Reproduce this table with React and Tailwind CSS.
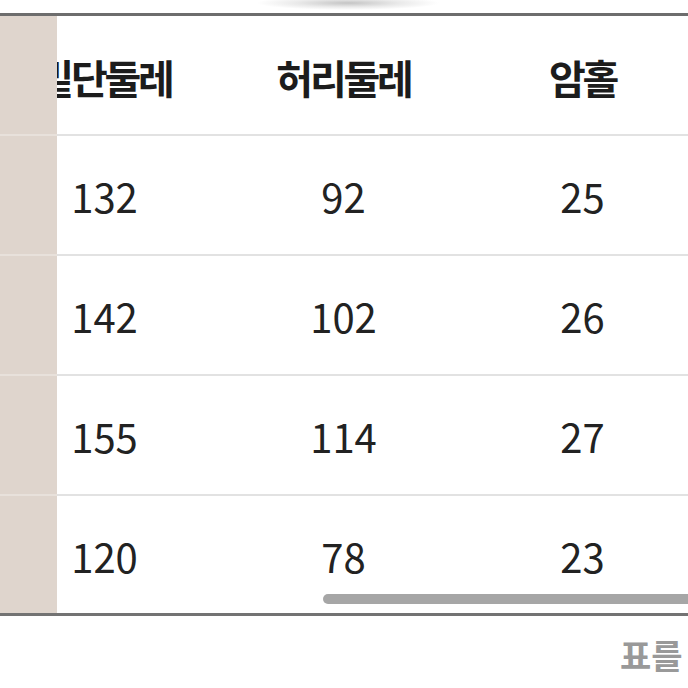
import React from "react"

const rows = [
    ["132", "92", "25"],
    ["142", "102", "26"],
    ["155", "114", "27"],
    ["120", "78", "23"],
]

const headers = ["밑단둘레", "허리둘레", "암홀"]

const font = { fontFamily: '"Noto Sans CJK KR", "Noto Sans", sans-serif' }

export default function App() {
    return (
        <div className="w-[688px] h-[688px] bg-white overflow-hidden" style={font}>
            {/* top edge of the image above */}
            <div className="h-[13px] relative overflow-hidden">
                <div className="absolute left-[256px] top-[-4px] w-[184px] h-[14px] bg-[radial-gradient(ellipse_at_center,#c4c4c4_0%,rgba(220,220,220,0.6)_40%,rgba(255,255,255,0)_70%)]" />
            </div>
            <div className="h-[3px] bg-[#6d6d6d]" />

            <div className="flex">
                {/* sticky first column */}
                <div className="w-[57px] shrink-0 bg-[#dfd5cd] flex flex-col">
                    <div className="h-[118px]" />
                    {rows.map((r, i) => (
                        <div key={i}>
                            <div className="h-[2px] bg-[#e8e1db]" />
                            <div className={i === rows.length - 1 ? "h-[117px]" : "h-[118px]"} />
                        </div>
                    ))}
                </div>

                <div className="flex-1 overflow-hidden relative">
                    <div className="-ml-[72px] w-[717px]">
                        <div className="grid grid-cols-[239px_239px_239px] h-[118px] items-center">
                            {headers.map((h) => (
                                <div key={h} className="text-center text-[40px] font-bold tracking-[-0.08em] text-[#1c1c1c] whitespace-nowrap pt-[4px]">
                                    {h}
                                </div>
                            ))}
                        </div>
                        {rows.map((r, i) => (
                            <div key={i}>
                                <div className="h-[2px] bg-[#e2e2e2]" />
                                <div className={"grid grid-cols-[239px_239px_239px] items-center " + (i === rows.length - 1 ? "h-[117px]" : "h-[118px]")}>
                                    {r.map((v, j) => (
                                        <div key={j} className="text-center text-[40px] text-[#222] pt-[2px]">
                                            {v}
                                        </div>
                                    ))}
                                </div>
                            </div>
                        ))}
                    </div>
                    {/* horizontal scrollbar */}
                    <div className="absolute left-[266px] bottom-[9px] w-[440px] h-[10px] rounded-full bg-[#a6a6a6]" />
                </div>
            </div>

            <div className="h-[3px] bg-[#737373]" />

            <div className="mt-[22px] pl-[620px] whitespace-nowrap text-[34px] leading-none font-bold text-[#999]">
                표를
            </div>
        </div>
    )
}
